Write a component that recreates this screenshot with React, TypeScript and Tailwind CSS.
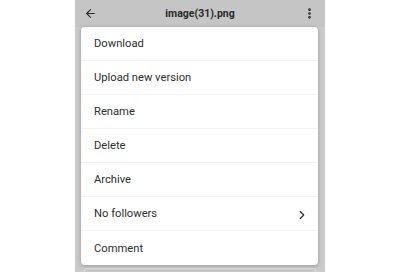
import { ArrowLeft, EllipsisVertical, ChevronRight } from 'lucide-react';

const items = ['Download', 'Upload new version', 'Rename', 'Delete', 'Archive', 'No followers', 'Comment'];

export default function App() {
  return (
    <div className="w-[400px] h-[272px] bg-white flex justify-center overflow-hidden" style={{ fontFamily: 'Roboto, "Liberation Sans", sans-serif' }}>
      <div className="w-[250px] h-full bg-[#cbcbcb] flex flex-col">
        {/* Top bar */}
        <div className="h-[27px] bg-[#c5c5c5] flex items-center justify-between px-[9px] shrink-0">
          <ArrowLeft className="w-[13px] h-[13px] text-[#2a2a2a]" strokeWidth={2} />
          <p className="text-[10.5px] font-bold text-[#2a2a2a]">image(31).png</p>
          <EllipsisVertical className="w-[13px] h-[13px] text-[#2a2a2a]" strokeWidth={3} />
        </div>

        {/* Menu */}
        <div className="ml-[6px] mr-[7px] bg-white rounded-[4px] shadow-[0_1px_4px_rgba(0,0,0,0.25)] flex flex-col">
          {items.map((label, i) => (
            <div
              key={label}
              className={`h-[34px] pt-[2px] flex items-center justify-between pl-[13px] pr-[9px] ${i < items.length - 1 ? 'border-b border-[#f3f3f3]' : ''}`}
            >
              <span className="text-[11.2px] text-[#2e2e2e]">{label}</span>
              {label === 'No followers' && <ChevronRight className="w-[14px] h-[14px] text-[#2e2e2e]" strokeWidth={2} />}
            </div>
          ))}
        </div>

        {/* Page card peeking underneath */}
        <div className="mx-[9px] mt-[3px] h-[6px] rounded-t-[3px] border-t border-x border-[#d9d9d9] bg-[#c8c8c8]" />
      </div>
    </div>
  );
}
